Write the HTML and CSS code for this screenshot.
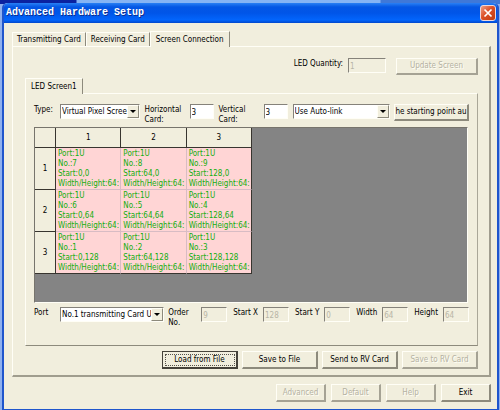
FILE: index.html
```html
<!DOCTYPE html>
<html lang="en">
<head>
<meta charset="utf-8">
<title>Advanced Hardware Setup</title>
<link rel="stylesheet" href="styles.css">
</head>
<body>
<main class="window">
  <header class="titlebar">
    <h1>Advanced Hardware Setup</h1>
    <button class="close" aria-label="Close"><svg viewBox="0 0 16 16"><path d="M4 4 12 12M12 4 4 12"/></svg></button>
  </header>
  <div class="client">
    <div class="tabs" role="tablist">
      <button class="tab" role="tab">Transmitting Card</button>
      <button class="tab" role="tab">Receiving Card</button>
      <button class="tab active" role="tab" aria-selected="true">Screen Connection</button>
    </div>
    <section class="page">
      <div class="quantity">
        <label for="qty">LED Quantity:</label>
        <input id="qty" class="field qty" value="1" disabled>
        <button class="btn" disabled>Update Screen</button>
      </div>
      <div class="tabs" role="tablist">
        <button class="tab active" role="tab" aria-selected="true">LED Screen1</button>
      </div>
      <section class="screen">
        <div class="options">
          <label class="type-label" for="type">Type:</label>
          <span class="combo type"><select id="type"><option>Virtual Pixel Scree</option></select><i class="arrow"></i></span>
          <label class="card-label" for="hc">Horizontal Card:</label>
          <input id="hc" class="field count" value="3">
          <label class="card-label" for="vc">Vertical Card:</label>
          <input id="vc" class="field count" value="3">
          <span class="combo link"><select aria-label="Link mode"><option>Use Auto-link</option></select><i class="arrow"></i></span>
          <button class="btn start">he starting point au</button>
        </div>
        <div class="grid">
          <table>
            <thead><tr><th class="corner"></th><th>1</th><th>2</th><th>3</th></tr></thead>
            <tbody>
              <tr><th>1</th>
                <td>Port:1U<br>No.:7<br>Start:0,0<br>Width/Height:64:</td>
                <td>Port:1U<br>No.:8<br>Start:64,0<br>Width/Height:64:</td>
                <td>Port:1U<br>No.:9<br>Start:128,0<br>Width/Height:64:</td></tr>
              <tr><th>2</th>
                <td>Port:1U<br>No.:6<br>Start:0,64<br>Width/Height:64:</td>
                <td>Port:1U<br>No.:5<br>Start:64,64<br>Width/Height:64:</td>
                <td>Port:1U<br>No.:4<br>Start:128,64<br>Width/Height:64:</td></tr>
              <tr><th>3</th>
                <td>Port:1U<br>No.:1<br>Start:0,128<br>Width/Height:64:</td>
                <td>Port:1U<br>No.:2<br>Start:64,128<br>Width/Height:64:</td>
                <td>Port:1U<br>No.:3<br>Start:128,128<br>Width/Height:64:</td></tr>
            </tbody>
          </table>
        </div>
        <div class="details">
          <label class="port-label" for="port">Port</label>
          <span class="combo port"><select id="port"><option>No.1 transmitting Card U</option></select><i class="arrow"></i></span>
          <label class="order-label" for="order">Order No.</label>
          <input id="order" class="field value" value="9" disabled>
          <label class="value-label" for="sx">Start X</label>
          <input id="sx" class="field value" value="128" disabled>
          <label class="value-label" for="sy">Start Y</label>
          <input id="sy" class="field value" value="0" disabled>
          <label class="value-label" for="w">Width</label>
          <input id="w" class="field value" value="64" disabled>
          <label class="value-label" for="h">Height</label>
          <input id="h" class="field value" value="64" disabled>
        </div>
      </section>
      <div class="actions">
        <button class="btn default">Load from File</button>
        <button class="btn">Save to File</button>
        <button class="btn">Send to RV Card</button>
        <button class="btn" disabled>Save to RV Card</button>
      </div>
    </section>
    <footer class="footer">
      <button class="btn" disabled>Advanced</button>
      <button class="btn" disabled>Default</button>
      <button class="btn" disabled>Help</button>
      <button class="btn">Exit</button>
    </footer>
  </div>
</main>
</body>
</html>
```
FILE: styles.css
```css
* { box-sizing: border-box; }

body {
  margin: 0;
  padding: 3px 1px 0 2px;
  background: linear-gradient(90deg, #0a22a0 0, #0a22a0 76px, #86b4f4 77px, #86b4f4 380px, #3f78d8 381px) top / 100% 4px no-repeat, #8fb0ee;
  font: 8px/10px "DejaVu Sans Condensed", "DejaVu Sans", sans-serif;
  color: #000;
}

button, input, select { font: inherit; color: inherit; margin: 0; }

.window {
  display: flex;
  flex-direction: column;
  min-height: calc(100vh - 3px);
  border: solid #1f55cc;
  border-width: 0 2px 1px;
  border-radius: 5px 5px 0 0;
  background: #f1eedd;
}

.titlebar {
  display: flex;
  align-items: center;
  justify-content: space-between;
  height: 20px;
  padding: 0 1px 0 2px;
  border-radius: 4px 4px 0 0;
  background: linear-gradient(#2a80f4 0, #0456e4 20%, #0055e8 50%, #0265fc 85%, #0148cc 100%);
}

h1 {
  margin: 0;
  font: bold 10px/14px "Liberation Mono", monospace;
  color: #fff;
  text-shadow: 1px 1px #0b2f90;
}

.close {
  width: 16px;
  height: 16px;
  padding: 0;
  border: 1px solid #f0d8d8;
  border-radius: 3px;
  background: linear-gradient(135deg, #f0a088, #dc5028 45%, #c03c10);
}

.close svg { display: block; width: 14px; height: 14px; stroke: #fff; stroke-width: 2; }

.client { flex: 1; padding: 8px 6px 7px 8px; }

.tabs { display: flex; align-items: flex-end; }

.tab {
  height: 14px;
  padding: 1px 4px 0;
  border: solid;
  border-width: 1px 1px 0;
  border-color: #fffef6 #8d8a7c #fffef6 #fffef6;
  background: #f1eedd;
  white-space: nowrap;
}

.tab.active {
  position: relative;
  height: 16px;
  margin-bottom: -1px;
  padding: 0 5px;
}

.page {
  padding: 11px 11px 6px 12px;
  border: solid;
  border-width: 1px 2px 2px 1px;
  border-color: #fffef6 #a09d8e #a09d8e #fffef6;
}

.quantity {
  display: flex;
  justify-content: flex-end;
  align-items: flex-start;
  margin-bottom: 3px;
}

.quantity label { margin: 1px 5px 0 0; }
.quantity .btn { width: 82px; }

.field {
  height: 15px;
  padding: 1px 0 0 1px;
  border: solid;
  border-width: 1px;
  border-color: #85827a #fffef6 #fffef6 #85827a;
  border-radius: 0;
  background: #fff;
}

.field:disabled { background: #f1eedd; color: #b8b5a6; }
.qty { width: 38px; margin-right: 10px; }

.btn {
  height: 17px;
  padding: 0;
  border: solid;
  border-width: 1px 2px 2px 1px;
  border-color: #fffef6 #8d8a7c #8d8a7c #fffef6;
  background: #f1eedd;
  white-space: nowrap;
  overflow: hidden;
}

.btn:disabled { color: #b4b1a2; text-shadow: 1px 1px #fffef6; border-color: #fffef6 #a5a294 #a5a294 #fffef6; }

.screen {
  padding: 10px 8px 14px;
  border: solid;
  border-width: 1px;
  border-color: #fffef6 #aaa798 #8d8a7c #fffef6;
}

.options { display: flex; align-items: flex-start; height: 23px; }
.options label, .details label { padding-top: 1px; }
.type-label { flex: 0 0 26px; }

.combo {
  position: relative;
  display: flex;
  height: 15px;
  border: 1px solid;
  border-color: #85827a #fffef6 #fffef6 #85827a;
  background: #fff;
}

.combo select {
  appearance: none;
  width: 100%;
  padding: 1px 12px 0 1px;
  border: 0;
  border-radius: 0;
  background: transparent;
  overflow: hidden;
  white-space: nowrap;
  text-overflow: clip;
}

.arrow {
  position: absolute;
  top: 0;
  right: 0;
  bottom: 0;
  width: 12px;
  border: 1px solid;
  border-color: #fffef6 #8d8a7c #8d8a7c #fffef6;
  background: #f1eedd;
  pointer-events: none;
}

.arrow::after {
  content: "";
  position: absolute;
  top: 4px;
  left: 2px;
  border: solid transparent;
  border-width: 3px 3px 0;
  border-top-color: #000;
}

.type { flex: 80 1 80px; min-width: 0; margin-right: 5px; }
.card-label { flex: 0 0 45px; }
.count { flex: 0 0 24px; width: 24px; margin-right: 5px; }
.link { flex: 98 1 98px; min-width: 0; margin-right: 4px; }
.start { flex: 0 0 75px; }

.grid {
  min-height: 176px;
  margin-right: 1px;
  border: solid;
  border-width: 1px;
  border-color: #77746c #fffef6 #fffef6 #77746c;
  background: #848484;
}

table { border-collapse: separate; border-spacing: 0; table-layout: fixed; width: 217px; }

th {
  height: 42px;
  padding: 0;
  border: solid #38352f;
  border-width: 0 1px 1px 0;
  background: #f1eedd;
  font-weight: normal;
  text-align: center;
}

thead th { height: 20px; }
.corner { width: 21px; }

td {
  height: 42px;
  padding: 1px 0 0 2px;
  border: solid #d8bcc4;
  border-width: 0 1px 1px 0;
  background: #ffd5d5;
  color: #12ae0c;
  white-space: nowrap;
  overflow: hidden;
}

td:last-child { border-right-color: #38352f; }
tr:last-child td { border-bottom-color: #38352f; }

.details { display: flex; align-items: flex-start; height: 24px; margin-top: 4px; }
.port-label { flex: 0 0 26px; }
.port { flex: 1 1 104px; min-width: 0; margin-right: 4px; }
.order-label { flex: 0 0 33px; height: 20px; padding-right: 8px; overflow: hidden; }
.value { flex: 0 0 26px; width: 26px; }
.value-label { flex: 0 0 auto; padding: 0 5px 0 6px; white-space: nowrap; }

.actions { display: flex; justify-content: flex-end; gap: 4px; margin-top: 5px; }
.actions .btn { width: 76px; height: 18px; }

.btn.default {
  border-color: #45423a;
  outline: 1px dotted #55524a;
  outline-offset: -4px;
}

.footer { display: flex; justify-content: flex-end; gap: 5px; margin-top: 7px; }
.footer .btn { width: 50px; height: 18px; }
```
